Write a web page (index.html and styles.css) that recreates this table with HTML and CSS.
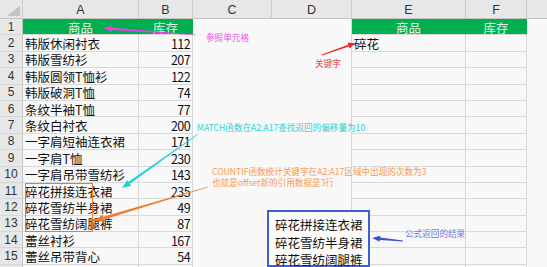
FILE: index.html
```html
<!DOCTYPE html>
<html lang="zh">
<head>
<meta charset="utf-8">
<title>Sheet</title>
<link rel="stylesheet" href="styles.css">
</head>
<body>
<div class="page">
  <div class="sheet">
    <div class="ch corner"><span class="tri"></span></div>
    <div class="ch">A</div><div class="ch">B</div><div class="ch">C</div><div class="ch">D</div><div class="ch">E</div><div class="ch">F</div><div class="ch last"></div>

    <div class="rh">1</div><div class="c g">商品</div><div class="c g">库存</div><div class="nb"></div><div class="nb d"></div><div class="c g">商品</div><div class="c g">库存</div><div class="nb"></div>
    <div class="rh">2</div><div class="c">韩版休闲衬衣</div><div class="c num">112</div><div class="nb"></div><div class="nb d"></div><div class="c">碎花</div><div class="c"></div><div class="nb"></div>
    <div class="rh">3</div><div class="c">韩版雪纺衫</div><div class="c num">207</div><div class="nb"></div><div class="nb d"></div><div class="c"></div><div class="c"></div><div class="nb"></div>
    <div class="rh">4</div><div class="c">韩版圆领T恤衫</div><div class="c num">122</div><div class="nb"></div><div class="nb d"></div><div class="c"></div><div class="c"></div><div class="nb"></div>
    <div class="rh">5</div><div class="c">韩版破洞T恤</div><div class="c num">74</div><div class="nb"></div><div class="nb d"></div><div class="c"></div><div class="c"></div><div class="nb"></div>
    <div class="rh">6</div><div class="c">条纹半袖T恤</div><div class="c num">77</div><div class="nb"></div><div class="nb d"></div><div class="c"></div><div class="c"></div><div class="nb"></div>
    <div class="rh">7</div><div class="c">条纹白衬衣</div><div class="c num">200</div><div class="nb"></div><div class="nb d"></div><div class="c"></div><div class="c"></div><div class="nb"></div>
    <div class="rh">8</div><div class="c">一字肩短袖连衣裙</div><div class="c num">171</div><div class="nb"></div><div class="nb d"></div><div class="c"></div><div class="c"></div><div class="nb"></div>
    <div class="rh">9</div><div class="c">一字肩T恤</div><div class="c num">230</div><div class="nb"></div><div class="nb d"></div><div class="c"></div><div class="c"></div><div class="nb"></div>
    <div class="rh">10</div><div class="c">一字肩吊带雪纺衫</div><div class="c num">143</div><div class="nb"></div><div class="nb d"></div><div class="c"></div><div class="c"></div><div class="nb"></div>
    <div class="rh">11</div><div class="c">碎花拼接连衣裙</div><div class="c num">235</div><div class="nb"></div><div class="nb d"></div><div class="c"></div><div class="c"></div><div class="nb"></div>
    <div class="rh">12</div><div class="c">碎花雪纺半身裙</div><div class="c num">49</div><div class="nb"></div><div class="nb d"></div><div class="c"></div><div class="c"></div><div class="nb"></div>
    <div class="rh">13</div><div class="c">碎花雪纺阔腿裤</div><div class="c num">87</div><div class="nb"></div><div class="nb d"></div><div class="c"></div><div class="c"></div><div class="nb"></div>
    <div class="rh">14</div><div class="c">蕾丝衬衫</div><div class="c num">167</div><div class="nb"></div><div class="nb d"></div><div class="c"></div><div class="c"></div><div class="nb"></div>
    <div class="rh">15</div><div class="c">蕾丝吊带背心</div><div class="c num">54</div><div class="nb"></div><div class="nb d"></div><div class="c"></div><div class="c"></div><div class="nb"></div>
    <div class="rh">16</div><div class="c">蕾丝连衣裙</div><div class="c num">198</div><div class="nb"></div><div class="nb d"></div><div class="c"></div><div class="c"></div><div class="nb"></div>
  </div>

  <div class="hl-box"></div>
  <div class="result-box">
    <div>碎花拼接连衣裙</div>
    <div>碎花雪纺半身裙</div>
    <div>碎花雪纺阔腿裤</div>
  </div>

  <div class="note note-ref">参照单元格</div>
  <div class="note note-key">关键字</div>
  <div class="note note-match">MATCH函数在A2:A17查找返回的偏移量为10</div>
  <div class="note note-count">COUNTIF函数统计关键字在A2:A17区域中出现的次数为3<br>也就是offset新的引用数据是3行</div>
  <div class="note note-res">公式返回的结果</div>

  <svg class="arrows" width="547" height="267" viewBox="0 0 547 267">
    <g class="a-mag">
      <polygon points="196.02,34.70 195.98,35.30 111.88,29.88 112.06,27.48"/>
      <polygon points="103,28 112.2,25.69 111.75,31.67"/>
    </g>
    <g class="a-red">
      <polygon points="322.13,55.38 321.87,54.62 348.13,44.72 348.79,46.60"/>
      <polygon points="356,43 349.46,48.49 347.46,42.83"/>
    </g>
    <g class="a-cyan">
      <polygon points="198.17,134.24 197.83,133.76 128.6,181.8 130.0,183.8"/>
      <polygon points="122,188 131.3,185.65 127.3,179.95"/>
    </g>
    <g class="a-orange">
      <polygon points="208.09,187.29 207.91,186.71 103.15,216.70 104.01,219.58"/>
      <polygon points="94,221 104.58,221.49 102.58,214.79"/>
    </g>
    <g class="a-blue">
      <polygon points="403.04,240.60 402.96,241.40 379.86,239.97 380.10,237.57"/>
      <polygon points="372,238 380.27,235.78 379.69,241.76"/>
    </g>
  </svg>
</div>
</body>
</html>
```

FILE: styles.css
```css
html, body {
  margin: 0;
  padding: 0;
  background: #f8f8f8;
  overflow: hidden;
}

.page {
  position: relative;
  width: 547px;
  height: 267px;
  overflow: hidden;
  font-family: "Noto Sans CJK SC", "Noto Sans", sans-serif;
}

.sheet {
  display: grid;
  grid-template-columns: 23px 116px 54px 79px 80px 114px 61px 20px;
  grid-template-rows: 19px repeat(16, 16.4px);
  background: #f8f8f8;
}

.sheet > div {
  box-sizing: border-box;
  display: flex;
  align-items: center;
  overflow: hidden;
  white-space: nowrap;
}

.ch {
  background: #e7e7e7;
  border-right: 1px solid #cdcdcd;
  border-bottom: 1px solid #c4c4c4;
  justify-content: center;
  font-family: "Liberation Sans", Arial, sans-serif;
  font-size: 12.5px;
  line-height: 14px;
  color: #333;
  padding-top: 2px;
}

.ch.last {
  border-right: none;
}

.corner {
  position: relative;
}

.tri {
  position: absolute;
  right: 2px;
  bottom: 2px;
  width: 0;
  height: 0;
  border-left: 13px solid transparent;
  border-bottom: 10px solid #c2c2c2;
}

.rh {
  background: #e7e7e7;
  border-right: 1px solid #c4c4c4;
  border-bottom: 1px solid #d6d6d6;
  justify-content: center;
  font-family: "Liberation Sans", Arial, sans-serif;
  font-size: 12px;
  line-height: 13px;
  color: #333;
  padding-top: 1px;
}

.c {
  border-right: 1px solid #d9d9d9;
  border-bottom: 1px solid #d9d9d9;
  font-size: 12.5px;
  line-height: 13px;
  color: #111;
  padding: 1px 0 0 2px;
}

.num {
  justify-content: flex-end;
  padding: 1px 2px 0 0;
  letter-spacing: -0.6px;
}

.g {
  background: #00b050;
  border-right-color: #00b050;
  color: #e4f4e4;
  justify-content: center;
  padding-left: 0;
}

.nb {
  background: #f8f8f8;
}

.nb.d {
  border-right: 1px solid #d9d9d9;
}

.hl-box {
  position: absolute;
  left: 25px;
  top: 183px;
  width: 68px;
  height: 49px;
  box-sizing: border-box;
  border: 1.5px solid #f07a2c;
}

.result-box {
  position: absolute;
  left: 267px;
  top: 210px;
  width: 103px;
  height: 57px;
  box-sizing: border-box;
  border: 2px solid #3d5fcf;
  background: #fbfbfb;
  padding: 4px 0 0 6px;
  font-size: 12.5px;
  line-height: 17.5px;
  color: #111;
}

.note {
  position: absolute;
  font-size: 8.6px;
  line-height: 11px;
  white-space: nowrap;
}

.note-ref { left: 206px; top: 32px; color: #ee52ee; }
.note-key { left: 315px; top: 58px; color: #f03c3c; }
.note-match { left: 197px; top: 122px; color: #2fd0d6; }
.note-count { left: 212px; top: 166px; color: #f59b55; }
.note-res { left: 405px; top: 228px; color: #6f80d8; }

.arrows {
  position: absolute;
  left: 0;
  top: 0;
  pointer-events: none;
}

.a-mag polygon { fill: #ea3ee8; }
.a-red polygon { fill: #f02828; }
.a-cyan polygon { fill: #1fd2d8; }
.a-orange polygon { fill: #f07a2c; }
.a-blue polygon { fill: #3555d0; }
```
